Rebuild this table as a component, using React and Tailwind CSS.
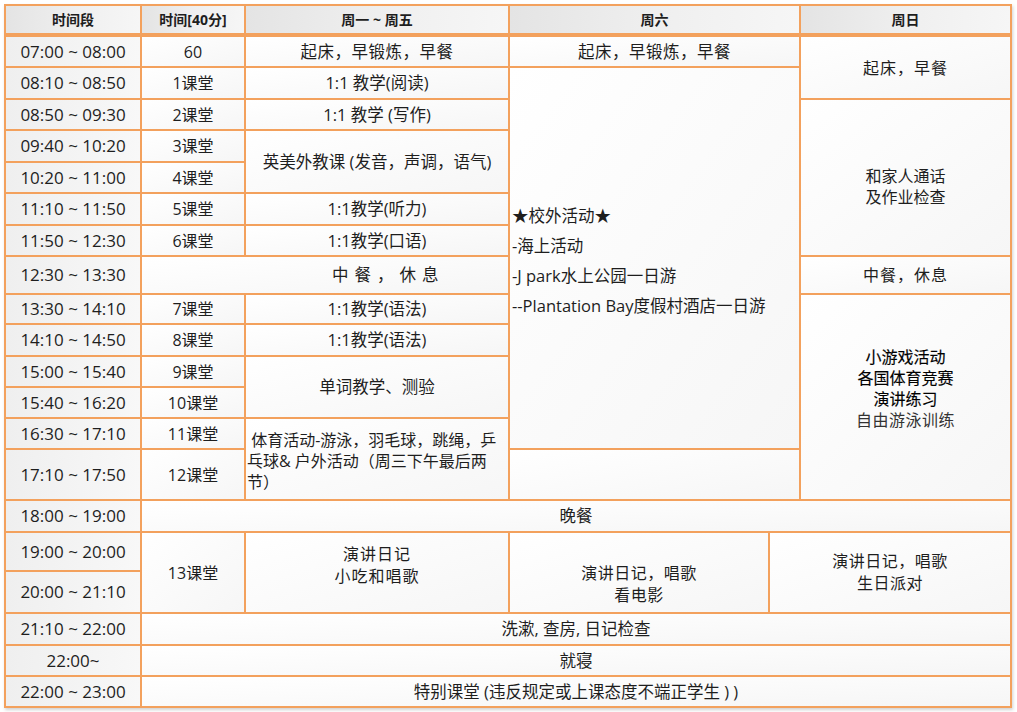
import React from "react";

const F = { fontFamily: '"Open Sans", "Noto Sans CJK SC", sans-serif' };

function C({ c, r, className = "", children, kind = "body" }) {
  const bg =
    kind === "head"
      ? "bg-gradient-to-r from-[#e4e4e4] via-[#efefef] to-[#f6f6f6] font-bold text-[14px] border-b-2 border-[#f3a15d]"
      : kind === "time"
      ? "bg-gradient-to-r from-[#efefef] to-[#f8f8f8] text-[17px]"
      : "bg-gradient-to-br from-[#ffffff] to-[#f6f6f6] text-[16.5px]";
  return (
    <div
      className={`flex items-center justify-center text-center text-[#1e1e1e] leading-[20px] ${bg} ${className}`}
      style={{ gridColumn: c, gridRow: r }}
    >
      {children}
    </div>
  );
}

export default function App() {
  const times = [
    ["07:00 ~ 08:00", 2],
    ["08:10 ~ 08:50", 3],
    ["08:50 ~ 09:30", 4],
    ["09:40 ~ 10:20", 5],
    ["10:20 ~ 11:00", 6],
    ["11:10 ~ 11:50", 7],
    ["11:50 ~ 12:30", 8],
    ["12:30 ~ 13:30", 9],
    ["13:30 ~ 14:10", 10],
    ["14:10 ~ 14:50", 11],
    ["15:00 ~ 15:40", 12],
    ["15:40 ~ 16:20", 13],
    ["16:30 ~ 17:10", 14],
    ["17:10 ~ 17:50", 15],
    ["18:00 ~ 19:00", 16],
    ["19:00 ~ 20:00", 17],
    ["20:00 ~ 21:10", 18],
    ["21:10 ~ 22:00", 19],
    ["22:00~", 20],
    ["22:00 ~ 23:00", 21],
  ];
  const classes = [
    ["60", 2],
    ["1课堂", 3],
    ["2课堂", 4],
    ["3课堂", 5],
    ["4课堂", 6],
    ["5课堂", 7],
    ["6课堂", 8],
    ["7课堂", 10],
    ["8课堂", 11],
    ["9课堂", 12],
    ["10课堂", 13],
    ["11课堂", 14],
    ["12课堂", 15],
  ];
  return (
    <div className="w-[1017px] h-[712px] bg-white pt-[4px] pl-[4px]" style={F}>
      <div
        className="grid w-[1008px] gap-[2px] p-[2px] bg-[#f3a15d] shadow-[1px_2px_3px_rgba(0,0,0,0.18)]"
        style={{
          gridTemplateColumns: "134px 102px 262px 258px 29px 209px",
          gridTemplateRows:
            "29px 29px 30px 29px 30px 29px 30px 29px 36px 28px 30px 29px 29px 29px 49px 30px 37px 40px 30px 29px 29px",
        }}
      >
        <C kind="head" c="1" r="1">时间段</C>
        <C kind="head" c="2" r="1">时间[40分]</C>
        <C kind="head" c="3" r="1">周一 ~ 周五</C>
        <C kind="head" c="4 / 6" r="1">周六</C>
        <C kind="head" c="6" r="1">周日</C>

        {times.map(([t, r]) => (
          <C key={t + r} kind="time" c="1" r={String(r)}>
            {t}
          </C>
        ))}
        {classes.map(([t, r]) => (
          <C key={t} c="2" r={String(r)} className="!text-[16px]">
            {t}
          </C>
        ))}

        <C c="3" r="2" className="tracking-[0.5px]">起床，早锻炼，早餐</C>
        <C c="3" r="3">1:1 教学(阅读)</C>
        <C c="3" r="4">1:1 教学 (写作)</C>
        <C c="3" r="5 / 7">英美外教课 (发音，声调，语气)</C>
        <C c="3" r="7">1:1教学(听力)</C>
        <C c="3" r="8">1:1教学(口语)</C>
        <C c="2 / 4" r="9" className="!justify-start pl-[190px] tracking-[6px]">中餐，休息</C>
        <C c="3" r="10">1:1教学(语法)</C>
        <C c="3" r="11">1:1教学(语法)</C>
        <C c="3" r="12 / 14">单词教学、测验</C>
        <C c="3" r="14 / 16" className="!justify-start !text-left !text-[16px] pl-[1px] pt-[4px] whitespace-nowrap leading-[21px]">
          <div>
            <div>&nbsp;体育活动-游泳，羽毛球，跳绳，乒</div>
            <div>乓球&amp; 户外活动（周三下午最后两</div>
            <div>节）</div>
          </div>
        </C>

        <C c="4 / 6" r="2" className="tracking-[0.5px]">起床，早锻炼，早餐</C>
        <C c="4 / 6" r="3 / 15" className="!justify-start !text-left pl-[2px] pt-[6px] leading-[30px]">
          <div>
            <div>★校外活动★</div>
            <div>-海上活动</div>
            <div>-J park水上公园一日游</div>
            <div>--Plantation Bay度假村酒店一日游</div>
          </div>
        </C>
        <C c="4 / 6" r="15" />

        <C c="6" r="2 / 4" className="!text-[16px] tracking-[1px]">起床，早餐</C>
        <C c="6" r="4 / 9" className="!text-[16px] leading-[21px] pt-[18px]">
          <div>
            <div>和家人通话</div>
            <div>及作业检查</div>
          </div>
        </C>
        <C c="6" r="9" className="!text-[16px] tracking-[1px]">中餐，休息</C>
        <C c="6" r="10 / 16" className="!text-[16px] pb-[16px] leading-[21px]">
          <div>
            <div className="text-black [-webkit-text-stroke:0.15px_black]">小游戏活动</div>
            <div className="text-black [-webkit-text-stroke:0.15px_black]">各国体育竞赛</div>
            <div className="text-black [-webkit-text-stroke:0.15px_black]">演讲练习</div>
            <div className="text-[#333] tracking-[0.5px]">自由游泳训练</div>
          </div>
        </C>

        <C c="2 / 7" r="16">晚餐</C>
        <C c="2" r="17 / 19" className="!text-[16px]">13课堂</C>
        <C c="3" r="17 / 19" className="!text-[16px] pb-[16px] leading-[22px]">
          <div>
            <div className="tracking-[1px]">演讲日记</div>
            <div className="tracking-[1px]">小吃和唱歌</div>
          </div>
        </C>
        <C c="4" r="17 / 19" className="!text-[16px] pt-[22px] leading-[22px]">
          <div>
            <div className="tracking-[0.5px]">演讲日记，唱歌</div>
            <div className="tracking-[0.5px]">看电影</div>
          </div>
        </C>
        <C c="5 / 7" r="17 / 19" className="!text-[16px] pb-[1px] leading-[22px]">
          <div>
            <div className="tracking-[0.5px]">演讲日记，唱歌</div>
            <div className="tracking-[0.5px]">生日派对</div>
          </div>
        </C>

        <C c="2 / 7" r="19">洗漱, 查房, 日记检查</C>
        <C c="2 / 7" r="20">就寝</C>
        <C c="2 / 7" r="21">特别课堂 (违反规定或上课态度不端正学生 ) )</C>
      </div>
    </div>
  );
}
